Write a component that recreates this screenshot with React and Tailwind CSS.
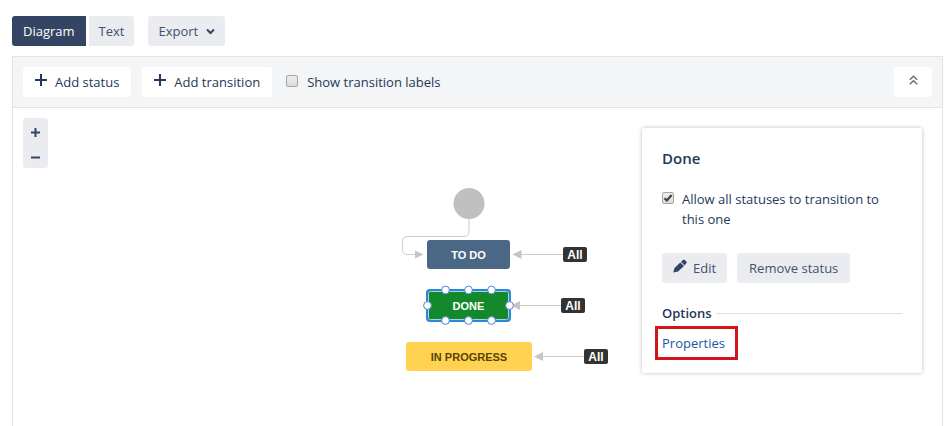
import clsx from 'clsx';

const STATUSES = [
  { name: 'TO DO', className: 'left-[414px] top-[132px] w-[83px] bg-[#4a6785] text-white' },
  { name: 'DONE', className: 'left-[414px] top-[183px] w-[83px] bg-[#14892c] text-white' },
  { name: 'IN PROGRESS', className: 'left-[393px] top-[234px] w-[126px] bg-[#ffd351] text-[#594300]' },
];

const GLOBAL_TRANSITIONS = [
  { id: 'todo', className: 'left-[550px] top-[139px]' },
  { id: 'done', className: 'left-[548px] top-[190px]' },
  { id: 'progress', className: 'left-[571px] top-[241px]' },
];

const HANDLES = [
  [432.5, 182], [455.5, 182], [478.5, 182],
  [432.5, 212.5], [455.5, 212.5], [478.5, 212.5],
  [414.5, 197.5], [496.5, 197.5],
];

const Button = ({ className, children, ...props }) => (
  <button
    type="button"
    className={clsx('flex h-[30px] items-center justify-center whitespace-nowrap', className)}
    {...props}
  >
    {children}
  </button>
);

const Plus = () => (
  <svg width="12" height="12" viewBox="0 0 12 12" className="mb-1" aria-hidden="true">
    <path d="M6 0v12M0 6h12" stroke="#253858" strokeWidth="2" />
  </svg>
);

const Checkbox = ({ label, className, ...props }) => (
  <label className={clsx('flex items-start', className)}>
    <span className="relative mt-[3px] block h-3 w-3 shrink-0">
      <input
        type="checkbox"
        className="peer block h-3 w-3 appearance-none rounded-xs border border-[#a6a6a6] bg-linear-to-b from-[#ededed] to-[#dcdcdc]"
        {...props}
      />
      <svg
        viewBox="0 0 12 12"
        className="pointer-events-none absolute inset-0 hidden h-3 w-3 peer-checked:block"
        aria-hidden="true"
      >
        <path d="M2.5 6.2l2.4 2.3L9.6 3" fill="none" stroke="#404040" strokeWidth="2.2" />
      </svg>
    </span>
    <span>{label}</span>
  </label>
);

const Edges = () => (
  <svg width="620" height="300" className="absolute left-0 top-0" aria-hidden="true">
    <circle cx="456" cy="95.5" r="15.5" fill="#c0c0c0" />
    <g fill="none" stroke="#cccccc">
      <path d="M456 111v12.500q0 5-5 5h-56.500q-5 0-5 5v8q0 5 5 5h8" />
      <path d="M508 146.500h42M506 197.500h42M530 248.500h41" />
    </g>
    <g fill="#c6c6c6">
      <path d="M402 142.500l8.500 4-8.500 4z" />
      <path d="M508.500 142l-9 4.500 9 4.500z" />
      <path d="M507 193l-9 4.500 9 4.500z" />
      <path d="M530 244l-9 4.500 9 4.500z" />
    </g>
  </svg>
);

const Selection = () => (
  <svg width="620" height="300" className="pointer-events-none absolute left-0 top-0" aria-hidden="true">
    <rect x="415.500" y="183.500" width="80" height="28" rx="2" fill="none" stroke="#a6d3f0" />
    <rect x="414" y="182" width="83" height="31" rx="3" fill="none" stroke="#2d86d9" strokeWidth="2" />
    {HANDLES.map(([cx, cy]) => (
      <circle key={`${cx}-${cy}`} cx={cx} cy={cy} r="3.900" fill="#fff" stroke="#4a86c8" />
    ))}
  </svg>
);

const StatusPanel = () => (
  <aside className="absolute right-5 top-5 w-[280px] rounded-xs bg-white px-5 pb-[13px] pt-5 shadow-[0_0_4px_rgba(0,0,0,0.25)]">
    <h2 className="text-[15px] font-semibold leading-5">Done</h2>
    <Checkbox
      className="mt-[21px] gap-2"
      label="Allow all statuses to transition to this one"
      defaultChecked
    />
    <div className="mt-6 flex gap-[10px]">
      <Button className="gap-[6px] rounded-[3px] bg-[#ebecf0] px-[11px] text-[#42526e]">
        <svg width="14" height="14" viewBox="0 0 14 14" className="mb-1" fill="#344563" aria-hidden="true">
          <path d="M.3 13.500l1.200-4.600 5.800-5.500 3.700 3.700-5.900 5.400z" />
          <path d="M8 2.800l2-1.800q1-.8 1.900 0l1.400 1.400q.9 1 0 1.900l-1.700 2.100z" />
        </svg>
        Edit
      </Button>
      <Button className="rounded-[3px] bg-[#ebecf0] px-3 text-[#42526e]">Remove status</Button>
    </div>
    <h3 className="mt-5 flex items-center gap-1 font-semibold after:h-px after:flex-1 after:bg-[#dfe1e6]">
      Options
    </h3>
    <div className="-ml-[7px] mt-[3px] flex">
      <a href="#properties" className="border-3 border-[#d3141b] py-1 pl-1 pr-[10px] text-[#2156a5]">
        Properties
      </a>
    </div>
  </aside>
);

const App = () => (
  <div className="flex min-h-screen flex-col bg-white pl-3 pr-[7px] pt-4 font-['Open_Sans',sans-serif] text-[13px] leading-5 text-[#253858]">
    <nav className="flex gap-[14px]">
      <div className="flex gap-[3px]">
        <Button className="rounded-l-[3px] bg-[#344563] px-[11px] text-white">Diagram</Button>
        <Button className="rounded-r-[3px] bg-[#ebecf0] px-[10px] text-[#42526e]">Text</Button>
      </div>
      <Button className="gap-2 rounded-[3px] bg-[#ebecf0] px-[10px] text-[#42526e]">
        Export
        <svg width="9" height="7" viewBox="0 0 9 7" aria-hidden="true">
          <path d="M1 1.500l3.500 3.500L8 1.500" fill="none" stroke="#344563" strokeWidth="2" />
        </svg>
      </Button>
    </nav>

    <main className="mt-[10px] flex flex-1 flex-col border border-b-0 border-[#e2e4e8]">
      <div className="flex items-center border-b border-[#e2e4e8] bg-[#f4f5f7] px-[10px] py-[10px]">
        <Button className="gap-2 rounded-[3px] bg-white px-3">
          <Plus />
          Add status
        </Button>
        <Button className="ml-[11px] gap-2 rounded-[3px] bg-white px-3">
          <Plus />
          Add transition
        </Button>
        <Checkbox className="ml-[14px] gap-[9px]" label="Show transition labels" />
        <Button className="ml-auto w-[38px] rounded-[3px] bg-white" aria-label="Collapse">
          <svg width="9" height="10" viewBox="0 0 9 10" className="mb-1" fill="none" stroke="#707070" strokeWidth="1.500" aria-hidden="true">
            <path d="M.8 4.800l3.700-3.600 3.700 3.600M.8 9.300l3.700-3.600 3.700 3.600" />
          </svg>
        </Button>
      </div>

      <div className="relative flex-1 overflow-hidden">
        <div className="absolute left-[10px] top-[10px] flex w-[25px] flex-col rounded-[3px] bg-[#ebecf0]">
          <button type="button" className="flex h-[25px] items-center justify-center pt-1" aria-label="Zoom in">
            <svg width="9" height="9" viewBox="0 0 9 9" stroke="#344563" strokeWidth="2" aria-hidden="true">
              <path d="M4.500 0v9M0 4.500h9" />
            </svg>
          </button>
          <button type="button" className="flex h-[25px] items-center justify-center pt-1" aria-label="Zoom out">
            <svg width="9" height="9" viewBox="0 0 9 9" stroke="#344563" strokeWidth="2" aria-hidden="true">
              <path d="M0 4.500h9" />
            </svg>
          </button>
        </div>

        <Edges />
        {STATUSES.map(({ name, className }) => (
          <div
            key={name}
            className={clsx(
              "absolute flex h-[29px] items-center justify-center rounded-[3px] font-['Liberation_Sans',Arial,sans-serif] text-[11px] font-bold",
              className
            )}
          >
            {name}
          </div>
        ))}
        <Selection />
        {GLOBAL_TRANSITIONS.map(({ id, className }) => (
          <div
            key={id}
            className={clsx(
              "absolute flex h-[15px] w-6 items-center justify-center rounded-xs bg-[#333333] font-['Liberation_Sans',Arial,sans-serif] text-xs font-bold text-white",
              className
            )}
          >
            All
          </div>
        ))}
        <StatusPanel />
      </div>
    </main>
  </div>
);

export default App;
